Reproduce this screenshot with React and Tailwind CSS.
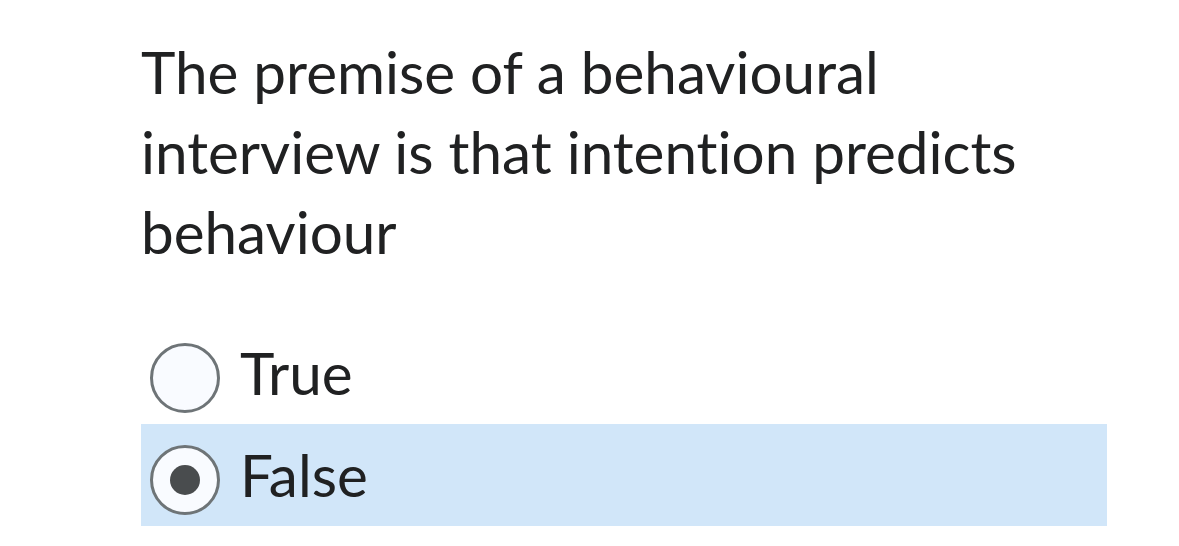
import React from 'react';

const options = [
  { label: 'True', checked: false },
  { label: 'False', checked: true },
];

function Radio({ checked }) {
  return (
    <span className="mt-[21px] ml-[9px] flex h-[70px] w-[70px] shrink-0 items-center justify-center rounded-full border-[3px] border-[#6e7477] bg-[#f9fbff]">
      {checked && <span className="h-[30px] w-[30px] rounded-full bg-[#494c4e]" />}
    </span>
  );
}

export default function App() {
  return (
    <div className="h-[546px] w-[1179px] overflow-hidden bg-white font-['Lato','Liberation_Sans',sans-serif] text-[#202122] [font-variant-ligatures:none]">
      <div className="ml-[141px] w-[966px] pt-[31px]">
        <p className="text-[58.4px] leading-[80px]">
          The premise of a behavioural interview is that intention predicts behaviour
        </p>

        <div className="mt-[51px] flex flex-col">
          {options.map((opt) => (
            <label
              key={opt.label}
              className={`flex h-[102px] items-start ${opt.checked ? 'bg-[#d1e6f9]' : ''}`}
            >
              <Radio checked={opt.checked} />
              <span className="ml-[20px] pt-[10px] text-[58.4px] leading-[80px]">{opt.label}</span>
            </label>
          ))}
        </div>
      </div>
    </div>
  );
}
